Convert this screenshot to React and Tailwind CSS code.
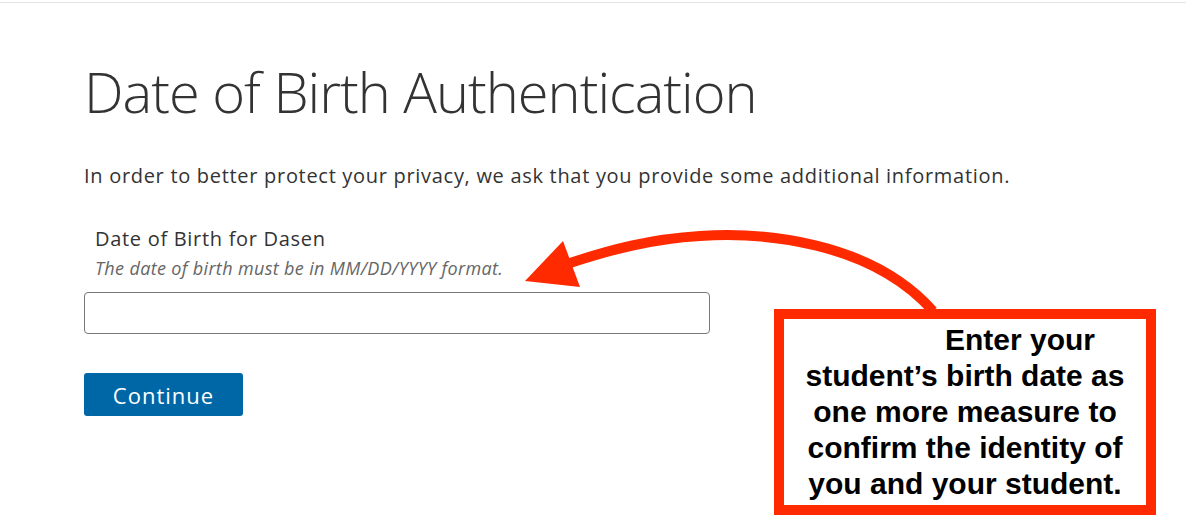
import React from 'react';

const App = () => {
  return (
    <div className="relative w-[1186px] h-[527px] overflow-hidden bg-white" style={{ fontFamily: '"Open Sans", sans-serif' }}>
      {/* Bordure haute */}
      <div className="mt-[2px] border-t border-[#e3e3e3]" />

      <div className="pl-[84px] text-[#333333]">
        <h1 className="mt-[55px] text-[56px] font-light leading-[1.2] tracking-[-1px]">Date of Birth Authentication</h1>
        <p className="mt-[37px] text-[20px] leading-[28px] tracking-[0.7px]">
          In order to better protect your privacy, we ask that you provide some additional information.
        </p>

        <div className="mt-[35px] pl-[11px]">
          <label className="block text-[20px] leading-[28px] tracking-[0.7px]">Date of Birth for Dasen</label>
          <span className="mt-[2px] block text-[18px] italic text-[#666666] leading-[26px] tracking-[0.35px]">The date of birth must be in MM/DD/YYYY format.</span>
        </div>
        <input
          type="text"
          className="mt-[11px] block w-[626px] h-[42px] rounded-[4px] border border-[#777777] bg-white px-3"
        />
        <button className="mt-[39px] block w-[159px] h-[43px] rounded-[3px] bg-[#0067a7] text-white text-[22px] leading-none tracking-[1px]">
          Continue
        </button>
      </div>

      {/* Flèche d'annotation */}
      <svg className="absolute inset-0 pointer-events-none" width="1186" height="527" viewBox="0 0 1186 527">
        <path d="M933 311 C 870 240, 760 232, 700 236 C 650 239, 610 250, 570 263" fill="none" stroke="#ff2a00" strokeWidth="10" />
        <polygon points="525,281 563,241 580,287" fill="#ff2a00" />
      </svg>

      {/* Encadré d'annotation */}
      <div
        className="absolute left-[774px] top-[309px] w-[382px] h-[206px] border-[10px] border-[#ff2a00] bg-white flex flex-col items-center justify-center text-black font-bold text-[30px] leading-[36px] text-center"
        style={{ fontFamily: '"Liberation Sans", Arial, sans-serif' }}
      >
        <div className="pl-[110px]">Enter your</div>
        <div>student’s birth date as</div>
        <div>one more measure to</div>
        <div>confirm the identity of</div>
        <div>you and your student.</div>
      </div>
    </div>
  );
};

export default App;
